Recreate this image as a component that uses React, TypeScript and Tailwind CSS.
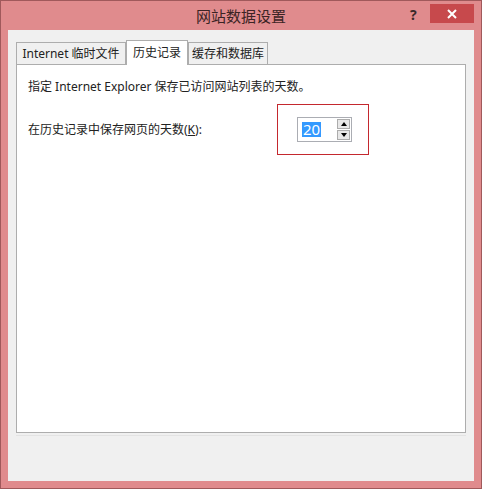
import React from 'react';

const font = {fontFamily: '"Noto Sans", "Noto Sans CJK SC", sans-serif'};

const Tab = ({label, width, active}: {label: string; width: string; active?: boolean}) => (
    <div
        className={
            active
                ? `relative z-10 -mb-px h-[25px] ${width} border border-b-0 border-[#adadad] bg-white pt-[3px] text-center text-[12px] text-[#222]`
                : `h-[22px] ${width} border border-b-0 border-[#adadad] bg-[#f0f0f0] pt-[2px] text-center text-[12px] text-[#222]`
        }
    >
        {label}
    </div>
);

const App: React.FC = () => {
    return (
        <div className="flex h-[489px] w-[482px] flex-col border border-[#a0595b] bg-[#e08b8d]" style={font}>
            <div className="relative h-[29px] shrink-0">
                <div className="pt-[4px] text-center text-[15px] text-[#3b2424]">网站数据设置</div>
                <div className="absolute left-[409px] top-[3px] text-[14px] font-bold text-[#3a2a2a]">?</div>
                <div className="absolute left-[429px] top-[3px] flex h-[19px] w-[44px] items-center justify-center bg-[#c7494c]">
                    <svg width="10" height="10" viewBox="0 0 10 10">
                        <path d="M1 1 L9 9 M9 1 L1 9" stroke="#fff" strokeWidth="2"/>
                    </svg>
                </div>
            </div>
            <div className="mx-[7px] mb-[7px] flex flex-1 flex-col bg-[#f0f0f0] px-[8px] pt-[10px]">
                <div className="flex h-[24px] items-end">
                    <Tab label="Internet 临时文件" width="w-[110px]"/>
                    <Tab label="历史记录" width="w-[62px]" active/>
                    <Tab label="缓存和数据库" width="w-[80px]"/>
                </div>
                <div className="h-[369px] border border-[#adadad] bg-white pl-[11px] pt-[14px] text-[12px] text-[#222]">
                    <p className="h-[16px] leading-[16px]">指定 Internet Explorer 保存已访问网站列表的天数。</p>
                    <div className="mt-[9px] flex items-center">
                        <p className="w-[249px] leading-[16px]">
                            在历史记录中保存网页的天数(<span className="underline">K</span>):
                        </p>
                        <div className="h-[51px] w-[92px] border border-[#c4282e] pl-[19px] pt-[12px]">
                            <div className="flex h-[25px] w-[55px] items-center border border-[#abadb3] bg-white pr-[1px]">
                                <span className="ml-[4px] bg-[#3399ff] px-[1px] text-[15px] leading-[15px] text-white">20</span>
                                <div className="ml-auto flex flex-col gap-[1px]">
                                    <div className="flex h-[10px] w-[13px] items-center justify-center border border-[#acacac] bg-[#e8e8e8]">
                                        <svg width="6" height="4" viewBox="0 0 6 4"><path d="M0 4 L3 0 L6 4 Z" fill="#000"/></svg>
                                    </div>
                                    <div className="flex h-[10px] w-[13px] items-center justify-center border border-[#acacac] bg-[#e8e8e8]">
                                        <svg width="6" height="4" viewBox="0 0 6 4"><path d="M0 0 L3 4 L6 0 Z" fill="#000"/></svg>
                                    </div>
                                </div>
                            </div>
                        </div>
                    </div>
                </div>
                <div className="mt-[2px] h-px bg-[#e3e3e3]"/>
            </div>
        </div>
    );
};

export default App;
